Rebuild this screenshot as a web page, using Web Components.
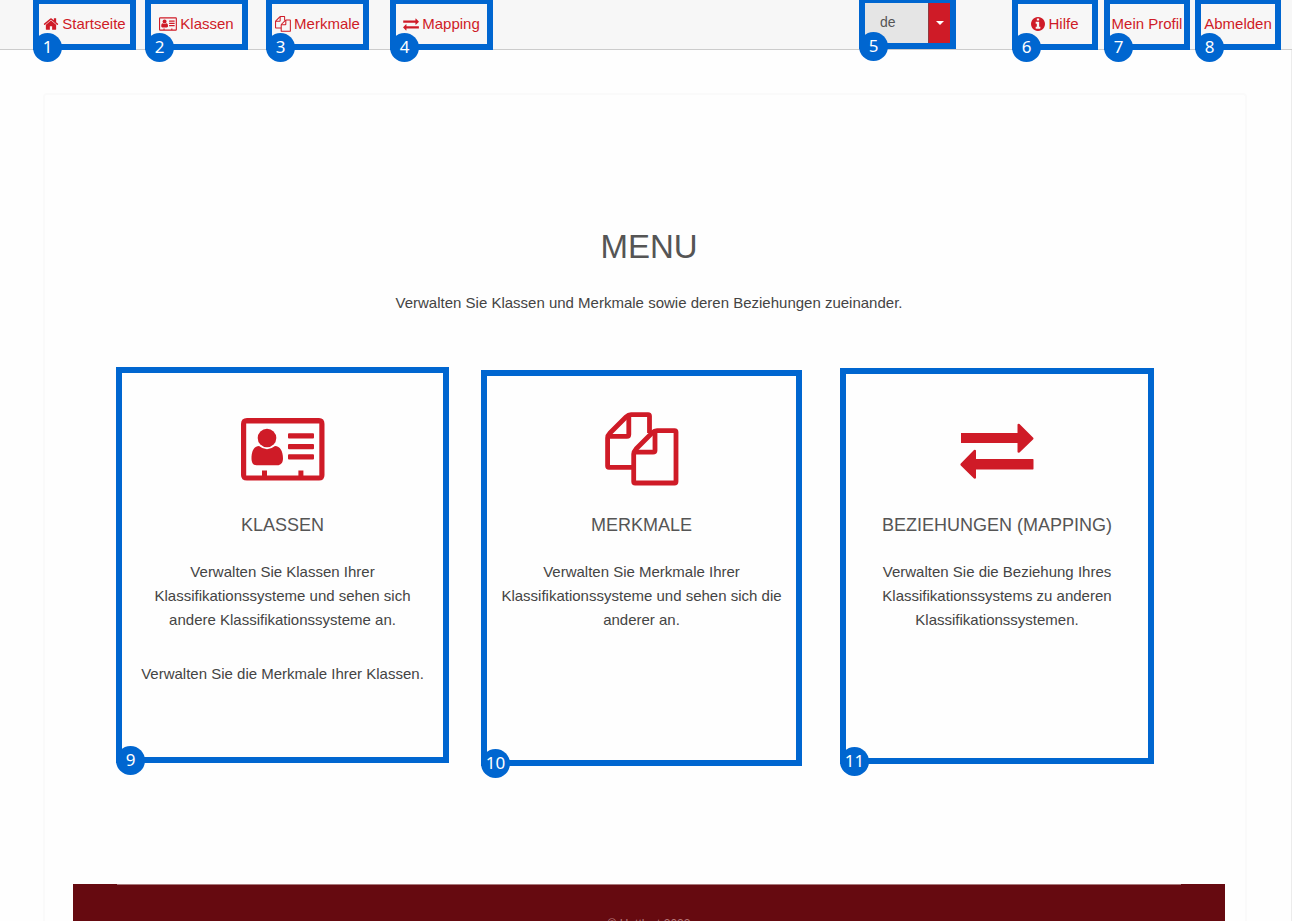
<!DOCTYPE html>
<html lang="de">
<head>
<meta charset="utf-8">
<title>Menu</title>
<style>
  body { margin: 0; height: 100vh; overflow: hidden; background: #fefefe; color: #444; font: 15px/24px "Liberation Sans", Arial, sans-serif; }
</style>
</head>
<body>
<menu-page></menu-page>

<script>
const ICONS = {
  home: ['0 0 1792 1792', '<path d="M1472 992v480q0 26-19 45t-45 19h-384v-384H768v384H384q-26 0-45-19t-19-45V992q0-1 .5-3t.5-3l575-474 575 474q1 2 1 6zm223-69l-62 74q-8 9-21 11h-3q-13 0-21-7L896 424l-692 577q-12 8-24 7-13-2-21-11l-62-74q-8-10-7-23.500t11-21.500l719-599q32-26 76-26t76 26l244 204V288q0-14 9-23t23-9h192q14 0 23 9t9 23v408l219 182q10 8 11 21.500t-7 23.500z"/>'],
  info: ['128 128 1536 1536', '<path d="M1152 1376v-160q0-14-9-23t-23-9h-96V672q0-14-9-23t-23-9H672q-14 0-23 9t-9 23v160q0 14 9 23t23 9h96v320h-96q-14 0-23 9t-9 23v160q0 14 9 23t23 9h448q14 0 23-9t9-23zm-128-896V320q0-14-9-23t-23-9H800q-14 0-23 9t-9 23v160q0 14 9 23t23 9h192q14 0 23-9t9-23zm640 416q0 209-103 385.500T1281.500 1561 896 1664t-385.500-103T231 1281.500 128 896t103-385.500T510.500 231 896 128t385.500 103T1561 510.500 1664 896z"/>'],
  card: ['0 0 84 63', '<path fill-rule="evenodd" d="M6 0H78Q83.500 0 83.500 6V57Q83.500 62.500 78 62.500H6Q0 62.500 0 57V6Q0 0 6 0ZM5.200 5.400V57.400H21V52.600H26V57.400H57.400V52.600H62.400V57.400H78.300V5.400Z"/><circle cx="26" cy="20" r="9.300"/><path d="M18 28Q26 34.500 34 28C39 28 42 33 42 40.500C42 45 39.500 47.300 36.500 47.300H15.500C12.500 47.300 10.500 45 10.500 40.500C10.500 33 13 28 18 28Z"/><rect x="47" y="15.300" width="26" height="5.300" rx="1"/><rect x="47" y="26" width="26" height="5.300" rx="1"/><rect x="47" y="36.300" width="26" height="5.300" rx="1"/>'],
  files: ['0 0 74 74', '<g fill="none" stroke="currentColor" stroke-width="4.800" stroke-linejoin="round"><path d="M28.500 55.300H4Q2.600 55.300 2.600 54V26Q2.600 23.500 5 21L21 5Q23.500 2.600 26 2.600H43Q44.500 2.600 44.500 4V21"/><path d="M3 24.300H22Q23.800 24.300 23.800 22.500V3"/><path d="M28.700 69.500V42Q28.700 39.500 31 37L47 21Q49.500 18.600 52 18.600H69.500Q71 18.600 71 20V69.500Q71 71 69.500 71H30.200Q28.700 71 28.700 69.500Z"/><path d="M29 40.200H48Q50 40.200 50 38.500V19"/></g>'],
  arrows: ['0 -5 74 61', '<path d="M1 14.500V10.500Q.3 14.500 1 14.500H57.500V6Z" fill="none"/><path d="M1 9.500V14.500Q0 14.500 1 14.500V19.500H57.500V28.500Q58 29.500 59.500 29L73 16Q74 15 73 14L59.500 .5Q58 0 57.500 1V9.500ZM73 35.500H16V27Q15.500 26 14 26.500L.8 40Q0 41 .8 42L14 55Q15.500 55.500 16 54.500V46H73Q73.500 46 73.500 45V36.500Q73.500 35.500 73 35.500Z"/>']
};

const define = (name, html, setup) => customElements.define(name, class extends HTMLElement {
  constructor() {
    super();
    const t = document.createElement('template');
    t.innerHTML = html;
    this.attachShadow({ mode: 'open' }).append(t.content.cloneNode(true));
  }
  connectedCallback() { if (setup) setup(this, this.shadowRoot); }
});

define('app-icon', `
  <style>
    :host { display: inline-block; color: #cf1b27; }
    svg { display: block; width: 100%; height: 100%; fill: currentColor; }
  </style><svg aria-hidden="true"></svg>`,
  (host, root) => {
    const [box, shapes] = ICONS[host.getAttribute('name')];
    const svg = root.querySelector('svg');
    svg.setAttribute('viewBox', box);
    svg.innerHTML = shapes;
  });

/* Numbered frame that highlights one region of the page */
define('marked-area', `
  <style>
    :host { display: block; position: relative; box-sizing: border-box; border: 6px solid #0066d0; }
    .badge { position: absolute; left: -6px; bottom: -18px; width: 29px; height: 29px; border-radius: 50%;
      background: #0066d0; color: #fff; font: 17px/28px "Noto Sans", sans-serif; text-align: center; }
  </style><slot></slot><span class="badge"></span>`,
  (host, root) => { root.querySelector('.badge').textContent = host.getAttribute('number'); });

define('nav-link', `
  <style>
    :host { display: block; height: 100%; }
    a { display: flex; align-items: center; justify-content: center; gap: 3px; height: 100%;
      color: #cf1b27; text-decoration: none; white-space: nowrap; }
  </style><a href="#"><slot name="icon"></slot><slot></slot></a>`);

define('language-select', `
  <style>
    :host { display: grid; grid-template-columns: 1fr 22px; height: 100%; background: #e5e5e5; }
    select { grid-area: 1 / 1 / 2 / 3; appearance: none; width: 100%; border: 0; margin: 0; padding: 0 0 2px 15px;
      border-radius: 0; background: transparent; color: #555; font: 14px "Liberation Sans", Arial, sans-serif; }
    .arrow { grid-area: 1 / 2; display: grid; place-items: center; background: #cf1b27;
      border-left: 1px solid #8f3a3f; pointer-events: none; }
    .arrow::before { content: ""; border: 4px solid transparent; border-top-color: #fff; border-bottom: 0; }
  </style>
  <span class="arrow"></span>
  <select aria-label="Sprache"><option>de</option><option>en</option></select>`);

define('top-bar', `
  <style>
    :host { display: block; }
    header { display: flex; height: 49px; padding: 0 11px 0 33px; background: #f7f7f7; border-bottom: 1px solid #ccc; }
    nav { display: flex; }
    .account { margin-left: auto; }
    marked-area { width: 103px; height: 50px; border-top-width: 4px; }
    .account marked-area { width: 86px; }
    .account marked-area.language { width: 97px; height: 49px; border-top-width: 3px; }
    .classes { margin-left: 9px; }
    .features { margin-left: 18px; }
    .mapping { margin-left: 21px; }
    .help { margin-left: 56px; }
    .profile { margin-left: 6px; }
    .logout { margin-left: 5px; }
    app-icon { width: 16px; height: 16px; }
    .small { width: 14px; height: 14px; }
    .wide { width: 18px; height: 14px; }
  </style>
  <header>
    <nav aria-label="Hauptmenü">
      <marked-area number="1"><nav-link><app-icon slot="icon" name="home"></app-icon>Startseite</nav-link></marked-area>
      <marked-area number="2" class="classes"><nav-link><app-icon slot="icon" class="wide" name="card"></app-icon>Klassen</nav-link></marked-area>
      <marked-area number="3" class="features"><nav-link><app-icon slot="icon" name="files"></app-icon>Merkmale</nav-link></marked-area>
      <marked-area number="4" class="mapping"><nav-link><app-icon slot="icon" name="arrows"></app-icon>Mapping</nav-link></marked-area>
    </nav>
    <nav class="account" aria-label="Konto">
      <marked-area number="5" class="language"><language-select></language-select></marked-area>
      <marked-area number="6" class="help"><nav-link><app-icon slot="icon" class="small" name="info"></app-icon>Hilfe</nav-link></marked-area>
      <marked-area number="7" class="profile"><nav-link>Mein Profil</nav-link></marked-area>
      <marked-area number="8" class="logout"><nav-link>Abmelden</nav-link></marked-area>
    </nav>
  </header>`);

define('menu-card', `
  <style>
    :host { display: block; padding: 0 12px; text-align: center; }
    .icon { display: grid; place-items: center; height: 76px; }
    h2 { margin: 26px 0 23px; font-size: 18px; line-height: 24px; font-weight: 400; color: #555; text-transform: uppercase; white-space: nowrap; }
    ::slotted(p) { margin: 0 0 30px; }
  </style>
  <div class="icon"><slot name="icon"></slot></div>
  <h2><slot name="title"></slot></h2>
  <slot></slot>`);

define('page-footer', `
  <style>
    :host { display: block; height: 80px; padding: 0 44px; background: #660a10; color: #b57679; text-align: center; font-size: 12px; line-height: 16px; }
    hr { height: 1px; margin: 0 0 31px; border: 0; background: #a8777a; }
    p { margin: 0; }
  </style>
  <footer><hr><p><slot></slot></p></footer>`);

define('menu-page', `
  <style>
    :host { display: flex; flex-direction: column; height: 100%; overflow: hidden; box-sizing: border-box; }
    .body { flex: 1; padding: 43px 44px 0 43px; border-right: 1px solid #ececec; }
    main { padding: 132px 20px 0 28px; border: 2px solid #fafafa; border-bottom: 0; border-radius: 4px 4px 0 0; }
    h1 { margin: 0 0 24px; font-size: 33px; line-height: 40px; font-weight: 400; color: #555; text-align: center; text-transform: uppercase; }
    .lead { margin: 0; text-align: center; }
    .cards { display: grid; grid-template-columns: 333fr 321fr 320fr; column-gap: 32px; align-items: start; margin: 52px 71px 118px 43px; }
    marked-area { height: 396px; padding-top: 38px; }
    .second { margin-top: 3px; padding-top: 35px; }
    .third { margin: 1px 0 0 6px; padding-top: 37px; }
    app-icon { width: 74px; height: 74px; }
    .wide { width: 84px; height: 63px; }
  </style>
  <top-bar></top-bar>
  <div class="body">
    <main>
      <h1>Menu</h1>
      <p class="lead">Verwalten Sie Klassen und Merkmale sowie deren Beziehungen zueinander.</p>
      <section class="cards">
        <marked-area number="9"><menu-card>
          <app-icon slot="icon" class="wide" name="card"></app-icon>
          <span slot="title">Klassen</span>
          <p>Verwalten Sie Klassen Ihrer Klassifikationssysteme und sehen sich andere Klassifikationssysteme an.</p>
          <p>Verwalten Sie die Merkmale Ihrer Klassen.</p>
        </menu-card></marked-area>
        <marked-area number="10" class="second"><menu-card>
          <app-icon slot="icon" name="files"></app-icon>
          <span slot="title">Merkmale</span>
          <p>Verwalten Sie Merkmale Ihrer Klassifikationssysteme und sehen sich die anderer an.</p>
        </menu-card></marked-area>
        <marked-area number="11" class="third"><menu-card>
          <app-icon slot="icon" name="arrows"></app-icon>
          <span slot="title">Beziehungen (Mapping)</span>
          <p>Verwalten Sie die Beziehung Ihres Klassifikationssystems zu anderen Klassifikationssystemen.</p>
        </menu-card></marked-area>
      </section>
      <page-footer>© Hottlect 2022</page-footer>
    </main>
  </div>`);
</script>
</body>
</html>
